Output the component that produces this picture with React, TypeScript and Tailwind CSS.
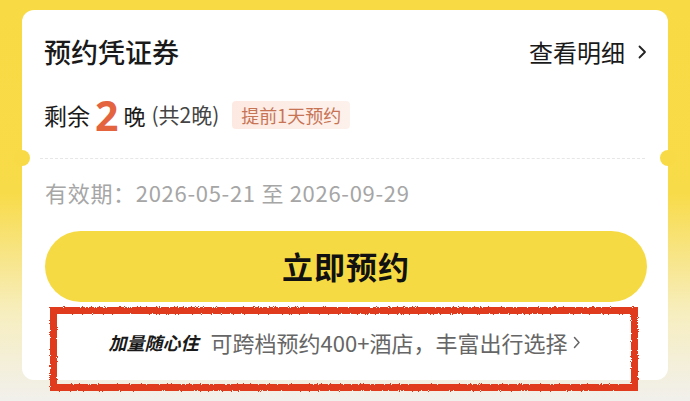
import React from "react";

export default function App() {
  return (
    <div
      className="w-[690px] h-[401px] overflow-hidden pt-[10px] px-[22px] bg-[linear-gradient(180deg,#f8da44_0%,#f8db48_48%,#f7eebf_78%,#f1f0ec_100%)]"
      style={{ fontFamily: '"Noto Sans CJK SC", "Noto Sans", sans-serif' }}
    >
      <div className="relative h-[370px] rounded-[12px] bg-white">
        {/* notches */}
        <div className="absolute left-[-8px] top-[140px] w-[16px] h-[16px] rounded-full bg-[#f8da46]" />
        <div className="absolute right-[-8px] top-[140px] w-[16px] h-[16px] rounded-full bg-[#f8da46]" />

        <div className="pt-[25px] pl-[22px] pr-[21px] flex items-center justify-between h-[58px]">
          <span className="text-[27px] leading-[34px] font-medium text-[#1a1a1a]">预约凭证券</span>
          <span className="flex items-center gap-[13px] text-[24px] leading-[32px] text-[#1a1a1a]">
            查看明细
            <svg width="9" height="14" viewBox="0 0 9 14" fill="none">
              <path d="M1.5 1.5 L7 7 L1.5 12.5" stroke="#222" strokeWidth="1.8" strokeLinecap="round" strokeLinejoin="round" />
            </svg>
          </span>
        </div>

        <div className="mt-[27px] pl-[22px] flex items-center h-[40px]">
          <span className="text-[23px] text-[#1a1a1a]">剩余</span>
          <span className="mx-[5px] text-[41px] leading-[40px] font-bold text-[#e4643f]" style={{ fontFamily: '"Noto Sans", sans-serif' }}>2</span>
          <span className="text-[22px] text-[#1a1a1a]">晚</span>
          <span className="ml-[6px] text-[21px] text-[#444]">(共2晚)</span>
          <span className="ml-[13px] h-[28px] px-[9px] flex items-center rounded-[4px] bg-[linear-gradient(90deg,#fde9e2,#fdf1ec)] text-[18px] text-[#c77455]">
            提前1天预约
          </span>
        </div>

        <div className="mt-[23px] ml-[18px] mr-[23px] border-t border-dashed border-[#e6e6e6]" />

        <div className="mt-[18px] pl-[23px] text-[22px] leading-[30px] text-[#a6a6a6] tracking-[0.7px]">
          有效期：2026-05-21 至 2026-09-29
        </div>

        <div className="mt-[24px] ml-[23px] mr-[21px] h-[71px] rounded-full bg-[#f6da44] flex items-center justify-center">
          <span className="text-[31px] font-bold text-[#111] tracking-[1px]">立即预约</span>
        </div>

        <div className="mt-[26px] flex items-center justify-center h-[28px]">
          <span className="text-[18px] font-bold italic text-[#1a1a1a]">加量随心住</span>
          <span className="ml-[12px] text-[22px] text-[#666]">可跨档预约400+酒店，丰富出行选择</span>
          <svg className="ml-[6px]" width="8" height="13" viewBox="0 0 8 13" fill="none">
            <path d="M1.5 1.5 L6 6.5 L1.5 11.5" stroke="#666" strokeWidth="1.5" strokeLinecap="round" strokeLinejoin="round" />
          </svg>
        </div>

        {/* annotation box */}
        <svg className="absolute left-[24px] top-[293px]" width="596" height="91" viewBox="0 0 596 91">
          <defs>
            <filter id="rough" x="-5%" y="-20%" width="110%" height="140%">
              <feTurbulence type="fractalNoise" baseFrequency="0.9" numOctaves="2" seed="3" result="n" />
              <feDisplacementMap in="SourceGraphic" in2="n" scale="3" />
            </filter>
          </defs>
          <rect x="7.5" y="7.5" width="581" height="77" fill="none" stroke="#e03a1c" strokeWidth="7" filter="url(#rough)" />
        </svg>
      </div>
    </div>
  );
}
